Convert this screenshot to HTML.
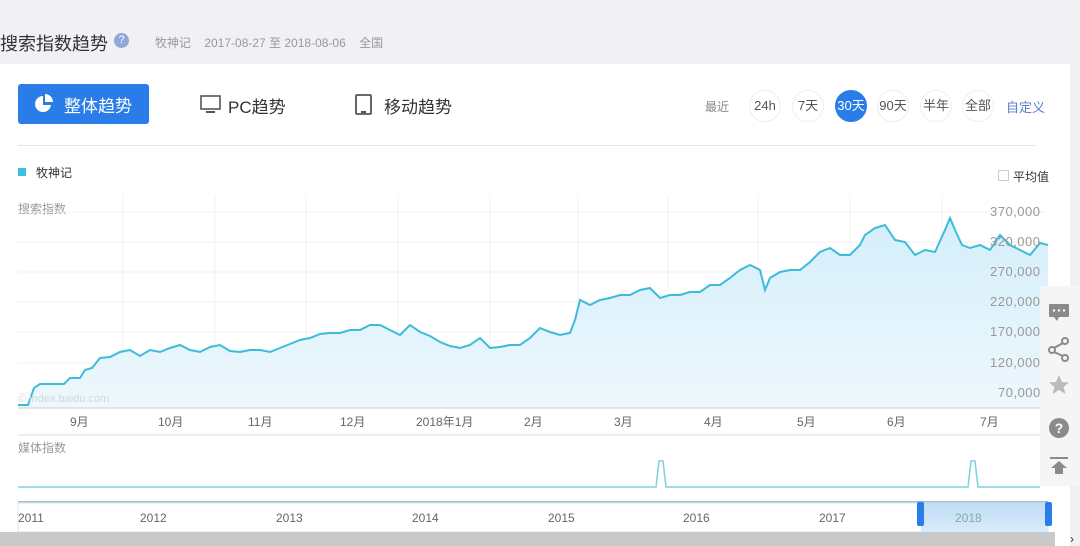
<!DOCTYPE html>
<html><head><meta charset="utf-8"><style>
*{margin:0;padding:0;box-sizing:border-box}
body{width:1080px;height:546px;overflow:hidden;background:#f1f1f5;font-family:"Liberation Sans","Noto Sans CJK SC",sans-serif;position:relative;color:#333}
.abs{position:absolute;white-space:nowrap}
.card{position:absolute;left:0;top:64px;width:1070px;height:482px;background:#fff}
.btn{position:absolute;top:84px;left:18px;width:131px;height:40px;background:#2a7de8;border-radius:3px;color:#fff;font-size:17px}
.pill{position:absolute;top:90px;width:32px;height:32px;border-radius:50%;border:1px solid #eee;font-size:13px;color:#555;text-align:center;line-height:30px}
.ylab{position:absolute;left:990px;font-size:13px;color:#999;letter-spacing:0.5px}
.mlab{position:absolute;top:413px;font-size:12px;color:#666}
.yr{position:absolute;top:511px;font-size:12px;color:#666}
</style></head><body>
<div class="abs" style="left:0;top:30px;font-size:18px;color:#333">搜索指数趋势</div>
<div class="abs" style="left:114px;top:33px;width:15px;height:15px;border-radius:50%;background:#8fa8d8;color:#fff;font-size:11px;text-align:center;line-height:15px">?</div>
<div class="abs" style="left:155px;top:34px;font-size:12px;color:#999">牧神记 &nbsp;&nbsp; 2017-08-27 至 2018-08-06 &nbsp;&nbsp; 全国</div>
<div class="card"></div>
<div class="btn"><svg class="abs" style="left:16px;top:10px" width="20" height="20" viewBox="0 0 20 20"><path d="M9 2A8 8 0 1 0 17 11H9Z" fill="#fff"/><path d="M11 0A8 8 0 0 1 19 8H11Z" fill="#fff"/></svg><span class="abs" style="left:46px;top:8px">整体趋势</span></div>
<svg class="abs" style="left:200px;top:95px" width="22" height="20"><rect x="1" y="1" width="19" height="13" fill="none" stroke="#555" stroke-width="1.6"/><rect x="6" y="16" width="9" height="2" fill="#555"/></svg>
<div class="abs" style="left:228px;top:93px;font-size:17px;color:#333">PC趋势</div>
<svg class="abs" style="left:355px;top:94px" width="18" height="22"><rect x="1" y="1" width="15" height="19" rx="1" fill="none" stroke="#555" stroke-width="1.8"/><rect x="6" y="17" width="5" height="2" fill="#555"/></svg>
<div class="abs" style="left:384px;top:93px;font-size:17px;color:#333">移动趋势</div>
<div class="abs" style="left:705px;top:98px;font-size:12px;color:#888">最近</div>
<div class="pill" style="left:749px">24h</div>
<div class="pill" style="left:792px">7天</div>
<div class="pill" style="left:835px;background:#2a7de8;color:#fff;border-color:#2a7de8">30天</div>
<div class="pill" style="left:877px">90天</div>
<div class="pill" style="left:920px">半年</div>
<div class="pill" style="left:962px">全部</div>
<div class="abs" style="left:1006px;top:97px;font-size:13px;color:#5a7fc4">自定义</div>
<div class="abs" style="left:18px;top:145px;width:1018px;height:1px;background:#e6e6e6"></div>
<div class="abs" style="left:18px;top:168px;width:8px;height:8px;background:#3cc0e0"></div>
<div class="abs" style="left:36px;top:164px;font-size:12px;color:#333">牧神记</div>
<div class="abs" style="left:998px;top:170px;width:11px;height:11px;border:1px solid #ccc"></div>
<div class="abs" style="left:1013px;top:168px;font-size:12px;color:#333">平均值</div>
<div class="abs" style="left:18px;top:200px;font-size:12px;color:#999">搜索指数</div>
<svg class="abs" style="left:0;top:0" width="1080" height="546">
<defs><linearGradient id="g" x1="0" y1="0" x2="0" y2="1"><stop offset="0" stop-color="#d4eefa"/><stop offset="1" stop-color="#eef8fd"/></linearGradient>
<linearGradient id="s" x1="0" y1="0" x2="0" y2="1"><stop offset="0" stop-color="#bfdcf5"/><stop offset="1" stop-color="#d9ebfa"/></linearGradient></defs>
<g stroke="#f0f0f0" stroke-width="1">
<line x1="18" y1="212" x2="1045" y2="212"/><line x1="18" y1="242" x2="1045" y2="242"/><line x1="18" y1="272" x2="1045" y2="272"/><line x1="18" y1="302" x2="1045" y2="302"/><line x1="18" y1="332" x2="1045" y2="332"/><line x1="18" y1="363" x2="1045" y2="363"/><line x1="18" y1="393" x2="1045" y2="393"/>
<line x1="123" y1="195" x2="123" y2="408"/><line x1="215" y1="195" x2="215" y2="408"/><line x1="306" y1="195" x2="306" y2="408"/><line x1="398" y1="195" x2="398" y2="408"/><line x1="490" y1="195" x2="490" y2="408"/><line x1="578" y1="195" x2="578" y2="408"/><line x1="668" y1="195" x2="668" y2="408"/><line x1="758" y1="195" x2="758" y2="408"/><line x1="850" y1="195" x2="850" y2="408"/><line x1="942" y1="195" x2="942" y2="408"/>
</g>
<polygon fill="url(#g)" points="18,408 18,405 28,405 34,388 40,384 64,384 70,378 80,378 85,370 92,368 100,358 110,357 120,352 130,350 140,356 150,350 160,352 170,348 180,345 190,350 200,352 210,347 220,345 230,351 240,352 250,350 260,350 270,352 280,348 290,344 300,340 310,338 320,334 330,333 340,333 350,330 360,330 370,325 380,325 390,330 400,335 410,325 420,332 430,336 440,342 450,346 460,348 470,345 480,338 490,348 500,347 510,345 520,345 530,338 540,328 550,332 560,335 570,333 575,320 580,300 590,305 600,300 610,298 620,295 630,295 640,290 650,288 660,298 670,295 680,295 690,292 700,292 710,285 720,285 730,278 740,270 750,265 760,270 765,290 770,278 780,272 790,270 800,270 810,262 820,252 830,248 840,255 850,255 860,245 865,235 875,228 885,225 895,240 905,242 915,255 925,250 935,252 945,230 950,218 955,230 962,245 970,248 980,245 990,250 1000,235 1010,245 1020,250 1030,255 1040,243 1048,245 1048,408"/>
<polyline fill="none" stroke="#3cbcd8" stroke-width="2" points="18,405 28,405 34,388 40,384 64,384 70,378 80,378 85,370 92,368 100,358 110,357 120,352 130,350 140,356 150,350 160,352 170,348 180,345 190,350 200,352 210,347 220,345 230,351 240,352 250,350 260,350 270,352 280,348 290,344 300,340 310,338 320,334 330,333 340,333 350,330 360,330 370,325 380,325 390,330 400,335 410,325 420,332 430,336 440,342 450,346 460,348 470,345 480,338 490,348 500,347 510,345 520,345 530,338 540,328 550,332 560,335 570,333 575,320 580,300 590,305 600,300 610,298 620,295 630,295 640,290 650,288 660,298 670,295 680,295 690,292 700,292 710,285 720,285 730,278 740,270 750,265 760,270 765,290 770,278 780,272 790,270 800,270 810,262 820,252 830,248 840,255 850,255 860,245 865,235 875,228 885,225 895,240 905,242 915,255 925,250 935,252 945,230 950,218 955,230 962,245 970,248 980,245 990,250 1000,235 1010,245 1020,250 1030,255 1040,243 1048,245"/>
<line x1="18" y1="408" x2="1040" y2="408" stroke="#ccc"/>
<line x1="18" y1="435" x2="1040" y2="435" stroke="#ddd"/>
<polyline fill="none" stroke="#7fd0e0" stroke-width="1.5" points="18,487 656,487 659,461 663,461 666,487 968,487 971,461 975,461 978,487 1040,487"/>
<line x1="18" y1="502" x2="1048" y2="502" stroke="#9fc3d6" stroke-width="2"/>
<rect x="18" y="503" width="1030" height="29" fill="#fff" stroke="#e6e6e6"/>
<rect x="921" y="503" width="127" height="29" fill="url(#s)"/>
<rect x="917" y="502" width="7" height="24" rx="2" fill="#2a7de8"/><rect x="1045" y="502" width="7" height="24" rx="2" fill="#2a7de8"/>
<rect x="0" y="532" width="1055" height="14" fill="#c9c9c9"/>
</svg>
<div class="abs" style="left:18px;top:393px;font-size:11px;color:#cfd8dc">© index.baidu.com</div>
<div class="ylab" style="top:204px">370,000</div>
<div class="ylab" style="top:234px">320,000</div>
<div class="ylab" style="top:264px">270,000</div>
<div class="ylab" style="top:294px">220,000</div>
<div class="ylab" style="top:324px">170,000</div>
<div class="ylab" style="top:355px">120,000</div>
<div class="ylab" style="top:385px;left:998px">70,000</div>
<div class="mlab" style="left:70px">9月</div><div class="mlab" style="left:158px">10月</div><div class="mlab" style="left:248px">11月</div><div class="mlab" style="left:340px">12月</div><div class="mlab" style="left:416px">2018年1月</div><div class="mlab" style="left:524px">2月</div><div class="mlab" style="left:614px">3月</div><div class="mlab" style="left:704px">4月</div><div class="mlab" style="left:797px">5月</div><div class="mlab" style="left:887px">6月</div><div class="mlab" style="left:980px">7月</div>
<div class="abs" style="left:18px;top:439px;font-size:12px;color:#999">媒体指数</div>
<div class="yr" style="left:18px">2011</div><div class="yr" style="left:140px">2012</div><div class="yr" style="left:276px">2013</div><div class="yr" style="left:412px">2014</div><div class="yr" style="left:548px">2015</div><div class="yr" style="left:683px">2016</div><div class="yr" style="left:819px">2017</div><div class="yr" style="left:955px;color:#8aa">2018</div>
<div class="abs" style="left:1040px;top:286px;width:40px;height:200px;background:#f5f5f5"></div>
<svg class="abs" style="left:1046px;top:300px" width="30" height="185">
<rect x="3" y="4" width="20" height="13" rx="1" fill="#8a8a8a"/><path d="M8 17l3 4 2-4z" fill="#8a8a8a"/><circle cx="8" cy="10.5" r="1.2" fill="#fff"/><circle cx="13" cy="10.5" r="1.2" fill="#fff"/><circle cx="18" cy="10.5" r="1.2" fill="#fff"/>
<g fill="none" stroke="#8a8a8a" stroke-width="2"><circle cx="19" cy="41" r="3"/><circle cx="6" cy="50" r="3"/><circle cx="19" cy="58" r="3"/><path d="M17 43L8 48M8 52L17 56"/></g>
<path d="M13 75l3 7 7 .5-5.5 4.5 2 7-6.5-4-6.5 4 2-7-5.5-4.5 7-.5z" fill="#bbb"/>
<circle cx="13" cy="128" r="10" fill="#8a8a8a"/><text x="13" y="133" font-size="14" font-weight="bold" fill="#fff" text-anchor="middle" font-family="Liberation Sans">?</text>
<rect x="4" y="157" width="18" height="2" fill="#8a8a8a"/><path d="M13 161l-8 7h4v6h8v-6h4z" fill="#8a8a8a"/>
</svg>
<div class="abs" style="left:1070px;top:532px;font-size:12px;color:#333">›</div>
</body></html>
